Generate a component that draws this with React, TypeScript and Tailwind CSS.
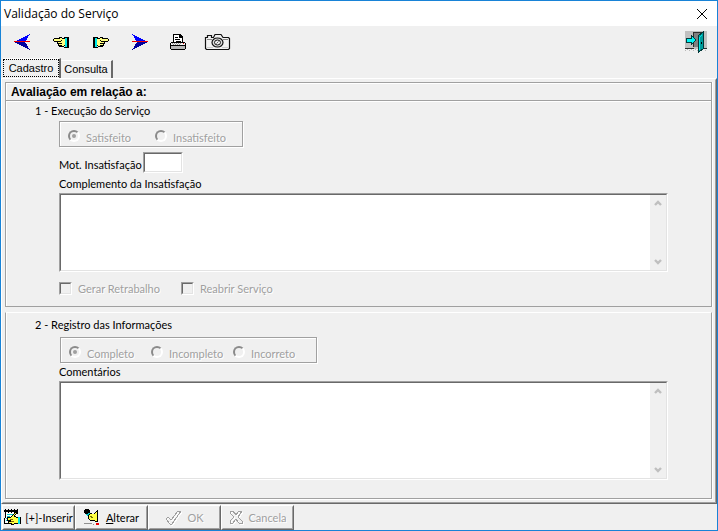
import type { ReactNode } from "react";

const raised = "border border-white border-r-[#696969] border-b-[#696969]";
const sunken =
  "border border-t-[#a0a0a0] border-l-[#a0a0a0] border-r-white border-b-white";
const sunkenInner =
  "border border-t-[#696969] border-l-[#696969] border-r-[#e3e3e3] border-b-[#e3e3e3]";
const disabledText = "text-[#a0a0a0] [text-shadow:1px_1px_0_#fff]";

function Arrow({ flip = false }: { flip?: boolean }) {
  return (
    <svg width="17" height="17" viewBox="0 0 17 17" shapeRendering="crispEdges" className={flip ? "-scale-x-100" : ""}>
      <path d="M0 8L16 0L11 8Z" fill="#0000ff" />
      <path d="M0 8H11L16 16Z" fill="#0000a0" />
      <path d="M0 7H16V8H0Z" fill="#f00000" />
    </svg>
  );
}

function Hand({ flip = false }: { flip?: boolean }) {
  return (
    <svg width="17" height="11" viewBox="0 0 17 11" shapeRendering="crispEdges" className={flip ? "-scale-x-100" : ""}>
      <path d="M1 1H6V0H9V1H12V9H11V10H6V9H5V7H4V5H1V4H0V2H1Z" fill="#000" />
      <path d="M1 2H7V1H9V2H12V8H11V9H7V8H6V6H5V4H1Z" fill="#ffff80" />
      <path d="M4 4H8V5H4ZM8 3H9V4H8ZM6 6H9V7H6ZM7 8H9V9H7Z" fill="#000" />
      <path d="M12 1H14V10H12Z" fill="#00e8e8" />
      <path d="M11 0H16V1H11ZM14 1H16V10H14ZM11 10H16V11H11Z" fill="#000" />
    </svg>
  );
}

function Printer() {
  return (
    <svg width="17" height="17" viewBox="0 0 17 17" shapeRendering="crispEdges">
      <path d="M3 0H10L13 3V8H15V9H16V15H15V16H1V15H0V9H1V8H3Z" fill="#000" />
      <path d="M4 1H9V4H12V8H4Z" fill="#fff" />
      <path d="M5 3H8V4H5ZM5 5H10V6H5ZM6 7H11V8H6Z" fill="#000" />
      <path d="M1 9H15V11H1Z" fill="#f4f4f4" />
      <path d="M2 9H3V10H2ZM4 9H5V10H4ZM6 9H7V10H6ZM8 9H9V10H8ZM10 9H11V10H10ZM3 10H4V11H3ZM5 10H6V11H5ZM7 10H8V11H7ZM9 10H10V11H9Z" fill="#999" />
      <path d="M13 9H14V10H13Z" fill="#e00000" />
      <path d="M1 12H15V15H1Z" fill="#b8b8b8" />
    </svg>
  );
}

function Camera() {
  return (
    <svg width="27" height="18" viewBox="0 0 27 18" fill="none">
      <path d="M1.5 4.5H3.5V2.5H7.5V4.5H9.5L11 1.5H17L19 4.5H24.5L25.5 5.5V15.5L24.5 16.5H2.5L1.5 15.5Z" fill="#f2f2f2" stroke="#101010" strokeWidth="1.2" />
      <path d="M3 6.5H8M19 6.5H24" stroke="#888" />
      <ellipse cx="13.5" cy="9.5" rx="5.5" ry="4.5" fill="#ddd" stroke="#101010" strokeWidth="1.2" />
      <ellipse cx="13.5" cy="9.5" rx="3" ry="2.5" fill="#eee" stroke="#111" />
      <path d="M12.5 10.5L14.5 8.5" stroke="#666" />
      <path d="M3 14.5H9M18 14.5H24" stroke="#ccc" />
    </svg>
  );
}

function Door() {
  return (
    <svg width="22" height="22" viewBox="0 0 22 22" shapeRendering="crispEdges">
      <path d="M0 0H22V18H0Z" fill="#c0c0c0" />
      <path d="M8 1H17V16H8Z" fill="#808080" />
      <path d="M8 1H18V2H9V16H8ZM0 17H9V18H0ZM18 17H22V18H18Z" fill="#303030" />
      <path d="M0 19H1V20H0ZM2 18H3V19H2ZM4 19H5V20H4ZM6 18H7V19H6ZM8 19H9V20H8ZM10 18H11V19H10ZM12 19H13V20H12ZM20 19H21V20H20Z" fill="#b8b8b8" />
      <path d="M1 7H6V4L11 9L6 14V11H1Z" fill="#00f4f4" stroke="#003c3c" />
      <path d="M13 5L18 1V18L14 21H13Z" fill="#009c9c" stroke="#003838" />
      <path d="M14 6L17 3V4L15 6V19H14Z" fill="#00e8e8" />
      <path d="M16 11H17V13H16Z" fill="#000" />
    </svg>
  );
}

function InsertIcon() {
  return (
    <svg width="17" height="17" viewBox="0 0 17 17" shapeRendering="crispEdges" className="shrink-0">
      <path d="M1 2H14L13 7L10 15H0L2 12Z" fill="#fff" />
      <path d="M0 1H14V3H0ZM1 0H2V4H1ZM4 0H5V4H4ZM7 0H8V4H7ZM10 0H11V4H10ZM13 0H14V5H13ZM1 3H2V9H1ZM0 9H1V15H0ZM1 14H9V15H1Z" fill="#000" />
      <path d="M3 5H9V6H3ZM3 7H6V8H3ZM2 9H5V10H2ZM2 11H4V12H2Z" fill="#00c8c8" />
      <path d="M3 8H7L12 3L13 4L10 7L14 9V14L10 15H7V14H4V12H6V11H3Z" fill="#ffff40" stroke="#000" />
      <path d="M6 10H9V11H6ZM7 12H10V13H7Z" fill="#806000" />
      <path d="M14 8H16V15H14Z" fill="#00e8e8" />
      <path d="M16 8H17V15H16Z" fill="#000" />
    </svg>
  );
}

function EditIcon() {
  return (
    <svg width="17" height="17" viewBox="0 0 17 17" shapeRendering="crispEdges" className="shrink-0">
      <path d="M0 1H1V0H5V1H6V4H5V5H3V6H2V5H1V4H0Z" fill="#000" />
      <path d="M2 5H4V4H6V5H5V7H3V6H2Z" fill="#00c8c8" />
      <path d="M4 7L7 4L9 6L13 2V12H11L9 11H6L4 9Z" fill="#ffff40" stroke="#000" />
      <path d="M6 7L9 9" fill="none" stroke="#707000" />
      <path d="M8 5H12V10H9V8H8Z" fill="#ffff40" />
      <path d="M13 1H14V13H13ZM11 12H13V13H11Z" fill="#000" />
      <path d="M0 14H8V15H0ZM9 15H10V16H9Z" fill="#909090" />
      <path d="M12 14H15V16H12Z" fill="#f00000" />
    </svg>
  );
}

function CheckIcon() {
  return (
    <svg width="18" height="16" viewBox="0 0 18 16" fill="none" shapeRendering="crispEdges">
      <path d="M2 10L4 8L7 11L14 2H17L8 15H6Z" stroke="#fff" />
      <path d="M1 9L3 7L6 10L13 1H16L7 14H5Z" stroke="#a0a0a0" />
    </svg>
  );
}

function CrossIcon() {
  const d = "M1 1H4L7 5L10 1H13L9 7L13 11V13H10L7 9L4 13H1V11L5 7L1 3Z";
  return (
    <svg width="15" height="15" viewBox="0 0 15 15" fill="none" shapeRendering="crispEdges">
      <path d={d} stroke="#fff" transform="translate(1 1)" />
      <path d={d} stroke="#a0a0a0" />
    </svg>
  );
}

function ToolButton({ label, children }: { label: string; children: ReactNode }) {
  return (
    <button type="button" aria-label={label} className="flex h-8 w-[39px] shrink-0 items-center justify-center">
      {children}
    </button>
  );
}

function Radio({ name, label, className, checked = false }: { name: string; label: string; className: string; checked?: boolean }) {
  return (
    <label className={`flex items-center gap-[6px] ${className}`}>
      <input
        type="radio"
        name={name}
        defaultChecked={checked}
        disabled
        className="mb-[3px] grid size-3 shrink-0 appearance-none place-items-center rounded-full border-2 border-t-[#8a8a8a] border-r-white border-b-white border-l-[#8a8a8a] before:size-1 before:rounded-full checked:before:bg-[#a0a0a0]"
      />
      <span className={disabledText}>{label}</span>
    </label>
  );
}

function Check({ label }: { label: string }) {
  return (
    <label className="flex w-[122px] items-center gap-[6px]">
      <span className={`flex ${sunken}`}>
        <input type="checkbox" disabled className={`size-[11px] appearance-none ${sunkenInner}`} />
      </span>
      <span className={disabledText}>{label}</span>
    </label>
  );
}

function Chevron({ down = false }: { down?: boolean }) {
  return (
    <svg width="8" height="7" viewBox="0 0 8 7" fill="none" className={down ? "rotate-180" : ""}>
      <path d="M1 5L4 2L7 5" stroke="#bfbfbf" strokeWidth="2.4" />
    </svg>
  );
}

function Memo({ id, className }: { id: string; className: string }) {
  return (
    <div className={`mr-[43px] ml-[53px] ${sunken}`}>
      <div className={`flex bg-white ${sunkenInner} ${className}`}>
        <textarea id={id} className="min-w-0 flex-1 resize-none p-1 outline-none" />
        <div className="flex w-4 flex-col items-center justify-between bg-[#f0f0f0] py-[5px]">
          <Chevron />
          <Chevron down />
        </div>
      </div>
    </div>
  );
}

function ActionButton({ icon, children, disabled = false, className }: { icon: ReactNode; children: ReactNode; disabled?: boolean; className: string }) {
  return (
    <button type="button" disabled={disabled} className={`h-[25px] w-[73px] ${raised}`}>
      <span className={`flex size-full items-center justify-center border border-transparent border-r-[#a0a0a0] border-b-[#a0a0a0] whitespace-nowrap ${className} ${disabled ? disabledText : ""}`}>
        {icon}
        <span>{children}</span>
      </span>
    </button>
  );
}

export default function App() {
  return (
    <div className="flex min-h-screen flex-col border border-[#1883d7] bg-[#f0f0f0] font-[Lato,'Liberation_Sans',sans-serif] text-[11px] leading-[13px] text-black">
      <header className="flex h-[25px] items-center justify-between bg-white pr-[9px] pl-[3px]">
        <h1 className="font-['Open_Sans','Noto_Sans',sans-serif] text-[12px]">Validação do Serviço</h1>
        <button type="button" aria-label="Fechar">
          <svg width="12" height="12" viewBox="0 0 12 12" stroke="#000" fill="none">
            <path d="M1 1L11 11M11 1L1 11" />
          </svg>
        </button>
      </header>

      <nav aria-label="Ferramentas" className="flex h-8 items-center pl-[2px]">
        <ToolButton label="Primeiro"><Arrow /></ToolButton>
        <ToolButton label="Anterior"><Hand /></ToolButton>
        <ToolButton label="Próximo"><Hand flip /></ToolButton>
        <ToolButton label="Último"><Arrow flip /></ToolButton>
        <ToolButton label="Imprimir"><Printer /></ToolButton>
        <ToolButton label="Capturar"><Camera /></ToolButton>
        <button type="button" aria-label="Sair" className="mr-[10px] ml-auto"><Door /></button>
      </nav>

      <div role="tablist" className="flex items-end pl-[2px] font-['Liberation_Sans',Arial,sans-serif]">
        <button type="button" role="tab" aria-selected="true" className="-mb-px flex h-[21px] w-[58px] border-t border-r-2 border-t-white border-r-[#696969] bg-[#f0f0f0] pb-[2px]">
          <span className="flex-1 border border-dotted border-black leading-4">Cadastro</span>
        </button>
        <button type="button" role="tab" aria-selected="false" className="h-[18px] w-[52px] border-t border-r-2 border-t-white border-r-[#696969]">
          Consulta
        </button>
      </div>

      <main className="flex flex-1 flex-col border border-white border-r-[#696969] border-b-[#696969]">
        <div className="flex flex-1 flex-col border border-transparent border-r-[#a0a0a0] border-b-[#a0a0a0] pt-[2px] pr-[3px] pb-[3px] pl-[2px]">
          <section className="border border-[#a0a0a0] shadow-[1px_0_0_#fff,inset_1px_1px_0_#fff]">
            <h2 className="h-[18px] border-b border-[#a0a0a0] pl-[5px] font-['Liberation_Sans',Arial,sans-serif] text-[12px] leading-[18px] font-bold">Avaliação em relação a:</h2>
            <div className="border-t border-white">
              <h3 className="pt-[2px] pl-[29px]">1 - Execução do Serviço</h3>
              <fieldset className="mt-1 ml-[53px] flex h-[26px] w-[184px] items-end border border-[#a0a0a0] pb-px pl-2 shadow-[1px_1px_0_#fff,inset_1px_1px_0_#fff]">
                <Radio name="execucao" label="Satisfeito" className="w-[87px]" checked />
                <Radio name="execucao" label="Insatisfeito" className="" />
              </fieldset>
              <div className="mt-[5px] ml-[53px] flex items-center gap-[3px]">
                <label htmlFor="motivo" className="w-[81px] pt-1 whitespace-nowrap">Mot. Insatisfação</label>
                <span className={`flex ${sunken}`}>
                  <input id="motivo" type="text" className={`h-[19px] w-[38px] bg-white px-1 outline-none ${sunkenInner}`} />
                </span>
              </div>
              <label htmlFor="complemento" className="mt-1 mb-[3px] ml-[53px] block">Complemento da Insatisfação</label>
              <Memo id="complemento" className="h-[77px]" />
              <div className="mt-[10px] ml-[53px] flex pb-[11px]">
                <Check label="Gerar Retrabalho" />
                <Check label="Reabrir Serviço" />
              </div>
            </div>
          </section>

          <section className="mt-[5px] flex-1 border border-[#a0a0a0] border-t-white shadow-[1px_1px_0_#fff,inset_1px_0_0_#fff]">
            <h3 className="pt-[5px] pl-[29px]">2 - Registro das Informações</h3>
            <fieldset className="mt-[6px] ml-[54px] flex h-[26px] w-[257px] items-end border border-[#a0a0a0] pb-px pl-2 shadow-[1px_1px_0_#fff,inset_1px_1px_0_#fff]">
              <Radio name="registro" label="Completo" className="w-[82px]" checked />
              <Radio name="registro" label="Incompleto" className="w-[82px]" />
              <Radio name="registro" label="Incorreto" className="" />
            </fieldset>
            <label htmlFor="comentarios" className="mt-[2px] mb-[3px] ml-[53px] block">Comentários</label>
            <Memo id="comentarios" className="h-[97px]" />
          </section>
        </div>
      </main>

      <footer className="flex h-[26px] items-end pl-px">
        <ActionButton icon={<InsertIcon />} className="gap-1">[+]-Inserir</ActionButton>
        <ActionButton icon={<EditIcon />} className="gap-[5px]"><u>A</u>lterar</ActionButton>
        <ActionButton icon={<CheckIcon />} className="gap-1" disabled>OK</ActionButton>
        <ActionButton icon={<CrossIcon />} className="gap-[5px]" disabled>Cancela</ActionButton>
      </footer>
    </div>
  );
}
